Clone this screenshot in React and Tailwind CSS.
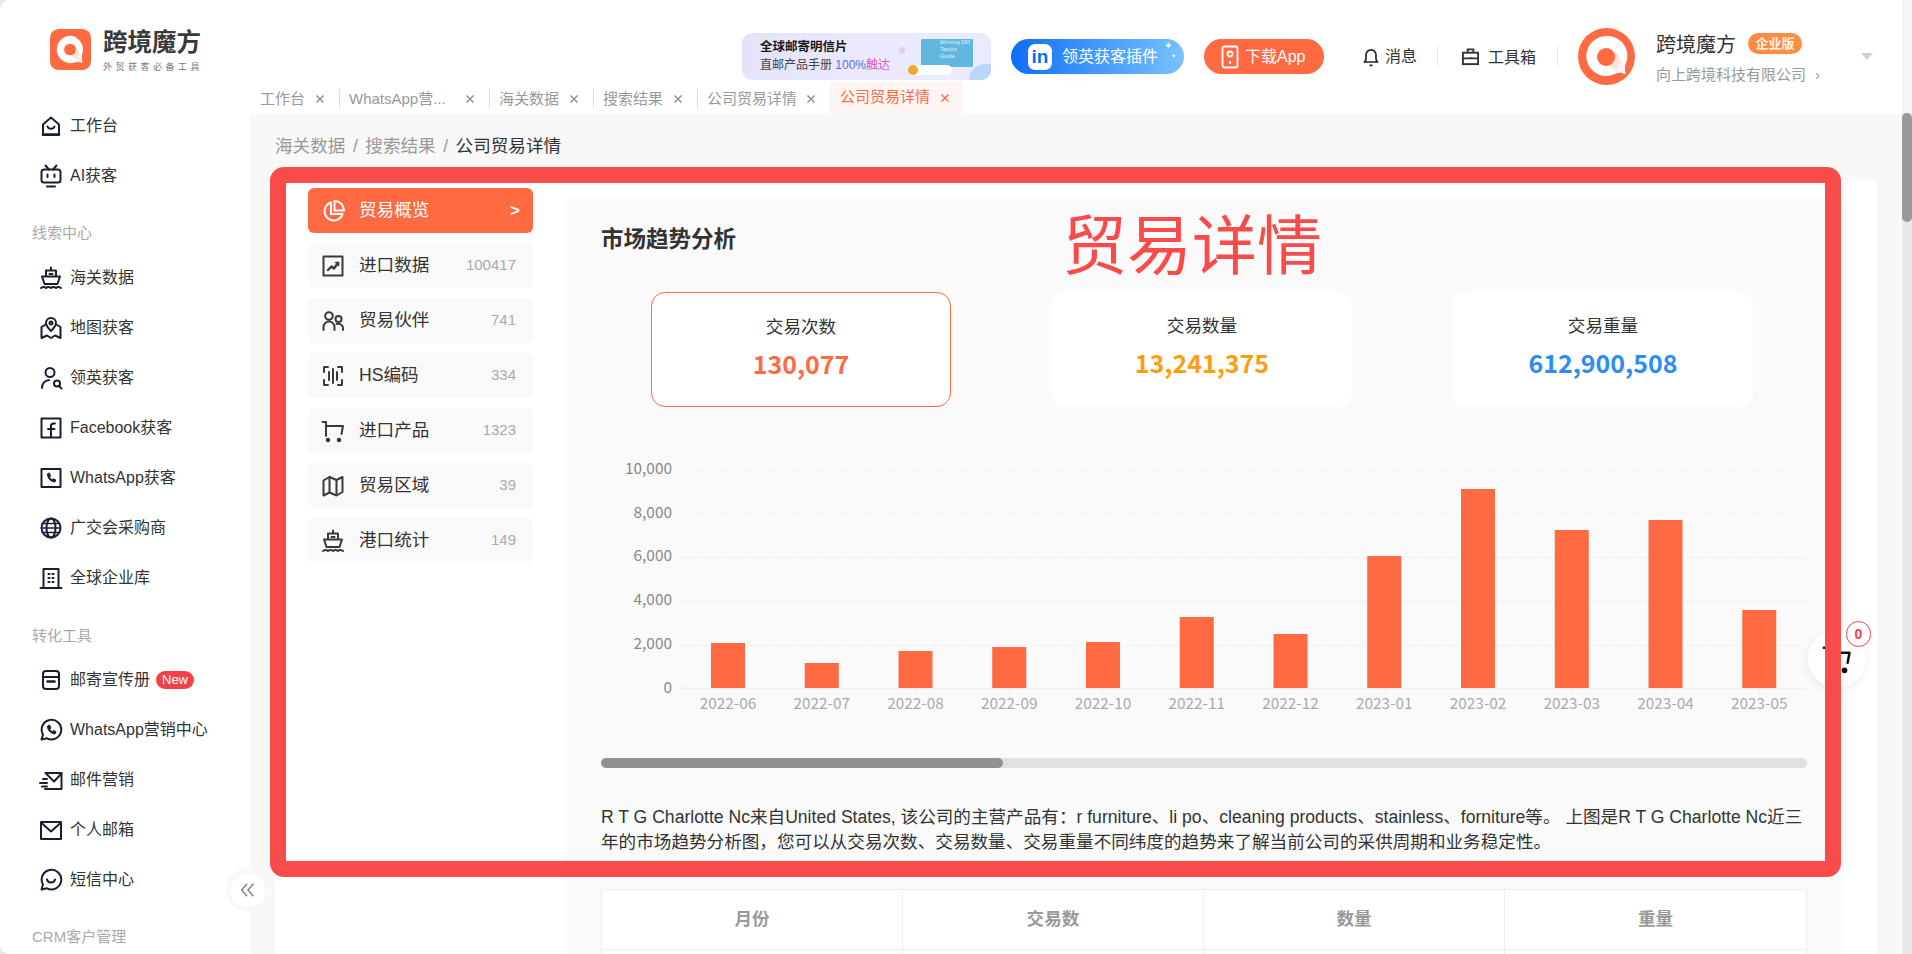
const sideGroups = [
  {
    items: [
      { label: "工作台", icon: "home" },
      { label: "AI获客", icon: "robot" },
    ],
  },
  {
    title: "线索中心",
    titleClass: "mt-[22px] mb-[10px]",
    items: [
      { label: "海关数据", icon: "ship" },
      { label: "地图获客", icon: "map" },
      { label: "领英获客", icon: "person" },
      { label: "Facebook获客", icon: "facebook" },
      { label: "WhatsApp获客", icon: "phoneBox" },
      { label: "广交会采购商", icon: "globe" },
      { label: "全球企业库", icon: "building" },
    ],
  },
  {
    title: "转化工具",
    titleClass: "mt-[23px] mb-[9px]",
    items: [
      { label: "邮寄宣传册", icon: "archive", isNew: true },
      { label: "WhatsApp营销中心", icon: "whatsapp" },
      { label: "邮件营销", icon: "mailFast" },
      { label: "个人邮箱", icon: "mail" },
      { label: "短信中心", icon: "sms" },
    ],
  },
];

const tabs = [
  { label: "工作台", w: "w-[80px]" },
  { label: "WhatsApp营...", w: "w-[150px]" },
  { label: "海关数据", w: "w-[104px]" },
  { label: "搜索结果", w: "w-[104px]" },
  { label: "公司贸易详情", w: "w-[132px]", last: true },
];

const menu = [
  { label: "贸易概览", icon: "pie", active: true },
  { label: "进口数据", icon: "chart", count: "100417" },
  { label: "贸易伙伴", icon: "people", count: "741" },
  { label: "HS编码", icon: "scan", count: "334" },
  { label: "进口产品", icon: "cart", count: "1323" },
  { label: "贸易区域", icon: "fold", count: "39" },
  { label: "港口统计", icon: "ship", count: "149" },
];

const stats = [
  { label: "交易次数", value: "130,077", color: "text-[#ff6a43]", active: true },
  { label: "交易数量", value: "13,241,375", color: "text-[#ff9c0f]" },
  { label: "交易重量", value: "612,900,508", color: "text-[#2b8cf7]" },
];

const bars = [
  ["2022-06", 643], ["2022-07", 663], ["2022-08", 651], ["2022-09", 647],
  ["2022-10", 642], ["2022-11", 617], ["2022-12", 634], ["2023-01", 556],
  ["2023-02", 489], ["2023-03", 530], ["2023-04", 520], ["2023-05", 610],
];

const yTicks = [["10,000", 470], ["8,000", 514], ["6,000", 557], ["4,000", 601], ["2,000", 645]];

function Icon({ name, size = 24, className = "" }) {
  const shapes = {
    home: <><path d="M4 21V10.500L12 3.500l8 7V21z" /><path d="M8.500 12.500c1 3 6 3 7 0" /><path d="M4 20.500h16" strokeWidth="2.600" /></>,
    robot: <><path d="M6.500 1.500l3.500 4M17.500 1.500L14 5.500" /><rect x="2.500" y="5.500" width="19" height="13" rx="2.500" /><path d="M8.500 10.500v2.500M15.500 10.500v2.500" /><path d="M8 22.500h8" /></>,
    ship: <><path d="M12 1.500v3M7 10V4.500h10V10" /><path d="M3 10.500h18L18.500 18h-13z" /><path d="M10.500 8h3" /><path d="M2 22c2.500-1.500 3.500-1.500 5 0 2-1.500 3-1.500 5 0 2-1.500 3-1.500 5 0 1.500-1.500 2.500-1.500 5 0" /></>,
    map: <><path d="M12 15c-3-3-5-5-5-8a5 5 0 0110 0c0 3-2 5-5 8z" /><circle cx="12" cy="7" r="1.500" /><path d="M6 9L2.500 11v11L8 19.500l4 2.500 4-2.500 5.500 2.500V11L18 9" /></>,
    person: <><circle cx="11" cy="6.500" r="4.500" /><path d="M3 22c0-4.500 3-7.500 7-8" /><circle cx="18" cy="17.500" r="3" /><path d="M20 20l2.500 2.500" /></>,
    facebook: <><rect x="2.500" y="2.500" width="19" height="19" /><path d="M16 7.500h-1.500c-1.500 0-2.500 1-2.500 2.500v11M9 13h6.500" /></>,
    phoneBox: <><rect x="2.500" y="3" width="19" height="18" /><path d="M8.500 8c0 4.500 3 7.500 7.500 8l.7-2.200-2.700-1-1 1c-1-.5-2-1.500-2.500-2.800l1-1-1-2.700z" fill="currentColor" strokeWidth="1" /></>,
    globe: <><circle cx="12" cy="12" r="9.500" /><ellipse cx="12" cy="12" rx="4.500" ry="9.500" /><path d="M2.500 12h19M3.500 7.500h17M3.500 16.500h17" strokeWidth="1.500" /></>,
    building: <><path d="M4.500 22V3h15v19" /><path d="M1.500 22h21" /><path d="M9.500 8h1M13.500 8h1M9.500 12h1M13.500 12h1M9.500 16h1M13.500 16h1" strokeWidth="2.200" /></>,
    archive: <><path d="M4 9h16v9a3 3 0 01-3 3H7a3 3 0 01-3-3z" /><path d="M4 9V6a3 3 0 013-3h10a3 3 0 013 3v3" /><path d="M8.500 13.500h7" strokeWidth="2.500" /></>,
    whatsapp: <><path d="M2.500 21.500l1.500-5A9.800 9.800 0 1 1 8 20.300z" /><path d="M8.500 8.500c.2 4 3 6.800 7.500 7.500l1-2.300-2.800-1.200-1 1.200c-1.200-.6-2-1.500-2.500-2.700l1.200-1-1.200-2.700z" fill="currentColor" strokeWidth="1" /></>,
    mailFast: <><path d="M6.500 5H22.500v16H6" /><path d="M7 5.500l8 8 7.500-8" /><path d="M1 15H8M3 18.500h5M4 11h4" /></>,
    mail: <><rect x="2" y="4" width="20" height="17" /><path d="M2.500 5l9.500 8.500L21.500 5" /></>,
    sms: <><path d="M2.500 21.500l1.500-5A9.800 9.800 0 1 1 8 20.300z" /><path d="M8 11.500c1 4 7 4 8 0" /></>,
    pie: <><path d="M10 3.500a9.200 9.200 0 1 0 11.500 11.500H10z" /><path d="M13.500 2v9.500H23A9.500 9.500 0 0 0 13.500 2z" /></>,
    chart: <><rect x="2.500" y="2.500" width="19" height="19" /><path d="M7 16l3.500-3.500 2.500 2 4-5.500" strokeWidth="2.400" /><path d="M14.500 8.500h3v3" strokeWidth="1.500" /></>,
    people: <><circle cx="8" cy="7" r="3.800" /><path d="M2.500 21v-3a5.500 5.500 0 0111 0v3" /><circle cx="17.500" cy="10" r="3" /><path d="M15.500 15c3-1 6.500 1 6.500 4v2" /></>,
    scan: <><path d="M7 3H3v5M17 3h4v5M3 16v5h4M21 16v5h-4" /><path d="M8 8v8M12 5v14M16 8v8" /></>,
    cart: <><path d="M1.500 3h3.500v14M5 7h17l-1.500 8" /><circle cx="7" cy="21" r="1.300" fill="currentColor" /><circle cx="18" cy="21" r="1.300" fill="currentColor" /></>,
    fold: <><path d="M2.500 6.500L8.500 3l7 3 6-3v15l-6 3.500-7-3-6 3z" /><path d="M8.500 3v15M15.500 6v15" /></>,
  };
  return (
    <svg viewBox="0 0 24 24" width={size} height={size} fill="none" stroke="currentColor" strokeWidth="2" strokeLinecap="round" strokeLinejoin="round" className={className}>
      {shapes[name]}
    </svg>
  );
}

function CloseX({ color = "#888" }) {
  return (
    <svg viewBox="0 0 10 10" width="10" height="10" fill="none" stroke={color} strokeWidth="1.400" className="shrink-0">
      <path d="M1.500 1.500l7 7M8.500 1.500l-7 7" />
    </svg>
  );
}

function BrandMark({ size }) {
  return (
    <svg viewBox="0 0 42 42" width={size} height={size} className="shrink-0">
      <defs>
        <linearGradient id="markTail" x1="0" y1="0" x2="1" y2="1">
          <stop offset="0" stopColor="#ffc9b5" />
          <stop offset="1" stopColor="#ffffff" />
        </linearGradient>
      </defs>
      <rect width="42" height="42" rx="9" fill="#ff6a43" />
      <path d="M21 7a14 14 0 1 0 4 27.400c3-.9 5.500-.6 8.500.3-1-3-1.200-6-.5-9A14 14 0 0 0 21 7z" fill="#fff" />
      <path d="M22 16c5 1 9 7 11 18-5-1-9-4-11-7z" fill="url(#markTail)" />
      <circle cx="20.500" cy="21" r="6" fill="#ff6a43" />
    </svg>
  );
}

function Avatar() {
  return (
    <svg viewBox="0 0 57 57" width="57" height="57" className="shrink-0">
      <defs>
        <linearGradient id="avatarTail" x1="0" y1="0" x2="1" y2="1">
          <stop offset="0" stopColor="#ffc9b5" />
          <stop offset="1" stopColor="#ffffff" />
        </linearGradient>
      </defs>
      <circle cx="28.500" cy="28.500" r="28.500" fill="#ff6a43" />
      <path d="M28.500 8a20 20 0 1 0 9 37.800c4-1.800 7-1 10.500.6-1.200-3-1.500-6-.6-9.800A20 20 0 0 0 28.500 8z" fill="#fff" />
      <path d="M30 20c8 2 14 10 17.500 26-8-2-14-6-17.500-9z" fill="url(#avatarTail)" />
      <circle cx="28" cy="29" r="9" fill="#ff6a43" />
    </svg>
  );
}

function Sidebar() {
  return (
    <aside className="relative flex h-full w-[250px] shrink-0 flex-col overflow-hidden bg-white">
      <div className="flex h-[101px] items-start pt-[29px] pl-[50px]">
        <BrandMark size={41} />
        <div className="ml-[12px] flex flex-col">
          <span className="-mt-[3px] text-[24.5px] leading-[30px] font-bold text-[#3a3a3a] font-['Noto_Sans_CJK_SC',sans-serif]">跨境魔方</span>
          <span className="mt-[6px] text-[9px] leading-[10px] tracking-[3.500px] whitespace-nowrap text-[#777]">外贸获客必备工具</span>
        </div>
      </div>
      {sideGroups.map((group, i) => (
        <div key={i} className="flex flex-col">
          {group.title && (
            <div className={`pl-[32px] text-[15px] leading-[20px] text-[#aaa] ${group.titleClass}`}>{group.title}</div>
          )}
          {group.items.map((item) => (
            <div key={item.label} className="flex h-[50px] items-center pl-[39px] text-[16px] text-[#333]">
              <Icon name={item.icon} className="shrink-0 text-[#172033]" />
              <span className="ml-[7px] whitespace-nowrap">{item.label}</span>
              {item.isNew && (
                <span className="ml-[6px] flex h-[18px] w-[38px] items-center justify-center rounded-full bg-[#f8404a] text-[13px] text-white">New</span>
              )}
            </div>
          ))}
        </div>
      ))}
      <div className="mt-[22px] pl-[32px] text-[15px] leading-[20px] text-[#aaa]">CRM客户管理</div>
    </aside>
  );
}

function TopBar() {
  return (
    <header className="relative z-10 flex h-[81px] shrink-0 items-start pl-[492px]">
      <div className="relative mt-[33px] h-[47px] w-[249px] shrink-0 overflow-hidden rounded-[10px] bg-gradient-to-r from-[#e4e3fb] via-[#ebe9fd] to-[#e9ecfd] pl-[18px]">
        <div className="pt-[6px] text-[12.5px] leading-[16px] font-bold text-[#1a1a1a]">全球邮寄明信片</div>
        <div className="mt-[2px] text-[12px] leading-[16px] text-[#444]">
          直邮产品手册 <span className="text-[#5a6cf0]">100%</span><span className="text-[#d857c8]">触达</span>
        </div>
        <div className="absolute top-[6px] left-[179px] h-[28px] w-[52px] rounded-[1px] bg-[#63b7df] pl-[19px] text-[5.5px] leading-[7px] text-[#dff2fb]">Winning DM Tactics Guide.</div>
        <div className="absolute top-[14px] left-[157px] h-[7px] w-[6px] rounded-full bg-[#e3cdf5]" />
        <div className="absolute right-[39px] bottom-[5px] h-[10px] w-[40px] rounded-full bg-white" />
        <div className="absolute right-[73px] bottom-[5px] h-[10px] w-[10px] rounded-full bg-[#f7a531]" />
        <div className="absolute right-0 bottom-0 h-[16px] w-[22px] rounded-tl-full bg-[#bcd6fb]" />
      </div>

      <div className="relative mt-[39px] ml-[20px] flex h-[35px] w-[173px] shrink-0 items-center rounded-full bg-gradient-to-r from-[#0a6cf5] to-[#76c2ff] pl-[17px] text-[16px] text-white">
        <span className="flex h-[26px] w-[24px] items-center justify-center rounded-[7px] bg-white text-[19px] leading-none font-bold text-[#0a6cf5]">in</span>
        <span className="ml-[10px] whitespace-nowrap">领英获客插件</span>
        <span className="absolute top-[2px] right-[12px] text-[10px] leading-none">✦</span>
        <span className="absolute top-[14px] right-[8px] text-[6px] leading-none">✦</span>
      </div>

      <div className="mt-[39px] ml-[20px] flex h-[35px] w-[120px] shrink-0 items-center rounded-full bg-[#ff6a43] pl-[17px] text-[16px] text-white">
        <svg viewBox="0 0 18 24" width="18" height="24" fill="none" stroke="#fff" strokeWidth="1.800">
          <rect x="1.500" y="1.500" width="15" height="21" rx="2" />
          <circle cx="9" cy="9" r="2.500" />
          <path d="M9 17v1" strokeLinecap="round" strokeWidth="2.200" />
        </svg>
        <span className="ml-[6px]">下载App</span>
      </div>

      <div className="mt-[45px] ml-[37px] flex h-[24px] items-center text-[16px] text-[#333]">
        <svg viewBox="0 0 24 24" width="20" height="20" fill="none" stroke="#222" strokeWidth="2" strokeLinejoin="round">
          <path d="M4 18c1.500-1 2-2 2-4V9.500a6 6 0 0112 0V14c0 2 .5 3 2 4z" />
          <path d="M11 22h2" strokeLinecap="round" />
        </svg>
        <span className="ml-[4px]">消息</span>
      </div>
      <div className="mt-[46px] ml-[20px] h-[20px] w-px bg-[#e3e3e3]" />
      <div className="mt-[43px] ml-[23px] flex h-[26px] items-center text-[16px] text-[#333]">
        <svg viewBox="0 0 20 20" width="19" height="19" fill="none" stroke="#333" strokeWidth="2">
          <rect x="2" y="6" width="16" height="12" />
          <path d="M7 6V2.500h6V6M2 12h16" />
          <path d="M10 10.500v2" strokeWidth="1.500" />
        </svg>
        <span className="mt-[4px] ml-[8px]">工具箱</span>
      </div>
      <div className="mt-[46px] ml-[21px] h-[20px] w-px bg-[#e3e3e3]" />
      <div className="mt-[28px] ml-[20px] shrink-0">
        <Avatar />
      </div>
      <div className="mt-[30px] ml-[21px] flex w-[164px] shrink-0 flex-col">
        <div className="flex h-[30px] items-center">
          <span className="text-[20px] text-[#333]">跨境魔方</span>
          <span className="-mt-[3px] ml-[12px] flex h-[21px] w-[54px] items-center justify-center rounded-full bg-gradient-to-r from-[#ff8a3d] to-[#ff8f45] text-[13px] font-bold text-[#fff3e8]">企业版</span>
        </div>
        <div className="mt-[3px] flex h-[24px] items-center whitespace-nowrap text-[15px] text-[#999]">
          向上跨境科技有限公司
          <span className="ml-[9px] text-[15px] text-[#999]">›</span>
        </div>
      </div>
      <div className="mt-[53px] ml-[41px] h-0 w-0 border-x-[6px] border-t-[7px] border-x-transparent border-t-[#ccd0d8]" />
    </header>
  );
}

function TabBar() {
  return (
    <nav className="flex h-[33px] shrink-0 items-start pl-[10px] text-[15px] text-[#999]">
      {tabs.map((tab, i) => (
        <div
          key={i}
          className={`mt-[8px] flex h-[19px] ${tab.w} items-center justify-between ${tab.last ? "" : "border-r border-[#ddd]"} pr-[14px] ${i > 0 ? "pl-[9px]" : ""} leading-none whitespace-nowrap`}
        >
          <span>{tab.label}</span>
          <CloseX />
        </div>
      ))}
      <div className="flex h-[33px] w-[134px] items-center justify-between rounded-t-[6px] bg-[#fff5f2] pr-[14px] pl-[10px] text-[#ff6a43]">
        <span>公司贸易详情</span>
        <CloseX color="#ff6a43" />
      </div>
    </nav>
  );
}

function SideMenu() {
  return (
    <div className="ml-[33px] flex w-[225px] shrink-0 flex-col gap-[10px] pt-[8px]">
      {menu.map((m) => (
        <div
          key={m.label}
          className={`flex h-[45px] items-center rounded-[6px] pl-[13px] ${m.active ? "bg-[#ff6a43] pr-[13px] text-white" : "bg-[#f9f9f9] pr-[17px] text-[#333]"}`}
        >
          <Icon name={m.icon} size={24} className={m.active ? "text-white" : "text-[#3a3a3a]"} />
          <span className="ml-[14px] flex-1 text-[17.6px] whitespace-nowrap">{m.label}</span>
          {m.active ? <span className="text-[17px] font-bold">&gt;</span> : <span className="text-[15px] text-[#aaa]">{m.count}</span>}
        </div>
      ))}
    </div>
  );
}

function Chart() {
  const top = 450;
  const axisY = 238.5;
  return (
    <svg viewBox="0 0 1206 280" width="1206" height="280" className="block font-['Noto_Sans_CJK_SC',sans-serif]">
      {yTicks.map(([label, y]) => (
        <g key={label}>
          <line x1="80" x2="1205" y1={y - top} y2={y - top} stroke="#e8ecf4" strokeDasharray="2 1" />
          <text x="71" y={y - top + 4} textAnchor="end" fontSize="15.400" fill="#888">{label}</text>
        </g>
      ))}
      <line x1="80" x2="1205" y1={axisY} y2={axisY} stroke="#eeeeee" strokeWidth="1.500" />
      <text x="71" y="243" textAnchor="end" fontSize="15.400" fill="#888">0</text>
      {bars.map(([label, barTop], i) => {
        const cx = 127 + i * 93.75;
        return (
          <g key={label}>
            <rect x={cx - 17} y={barTop - top} width="34" height={688 - barTop} fill="#ff6a43" />
            <line x1={cx} x2={cx} y1="239" y2="244" stroke="#eeeeee" />
            <text x={cx} y="259" textAnchor="middle" fontSize="15.400" fill="#aaa">{label}</text>
          </g>
        );
      })}
    </svg>
  );
}

function TrendPanel() {
  const headers = ["月份", "交易数", "数量", "重量"];
  return (
    <div className="mt-[17px] ml-[32px] w-[1279px] shrink-0 rounded-t-[12px] bg-[#fafafa] pr-[37px] pl-[36px]">
      <h2 className="pt-[28px] text-[22.5px] leading-[30px] font-bold text-[#333]">市场趋势分析</h2>
      <div className="mt-[37px] ml-[50px] flex gap-[101px]">
        {stats.map((s) => (
          <div
            key={s.label}
            className={`flex h-[115px] w-[300px] flex-col items-center rounded-[14px] bg-white pt-[18px] font-['Noto_Sans_CJK_SC',sans-serif] ${s.active ? "border border-[#ff6a43]" : ""}`}
          >
            <span className="text-[17.6px] leading-[30px] text-[#333]">{s.label}</span>
            <span className={`mt-[4px] text-[25px] leading-[36px] font-bold ${s.color}`}>{s.value}</span>
          </div>
        ))}
      </div>
      <div className="mt-[43px]">
        <Chart />
      </div>
      <div className="mt-[28px] h-[10px] w-full rounded-full bg-[#e0e0e0]">
        <div className="h-full w-[402px] rounded-full bg-[#909090]" />
      </div>
      <p className="mt-[37px] text-[17.6px] leading-[25px] text-[#333]">
        R T G Charlotte Nc来自United States, 该公司的主营产品有：r furniture、li po、cleaning products、stainless、forniture等。 上图是R T G Charlotte Nc近三年的市场趋势分析图，您可以从交易次数、交易数量、交易重量不同纬度的趋势来了解当前公司的采供周期和业务稳定性。
      </p>
      <div className="mt-[34px] grid grid-cols-4 border border-b-0 border-[#eee] bg-white">
        {headers.map((h, i) => (
          <div key={h} className={`flex h-[60px] items-center justify-center border-b border-[#eee] text-[17.6px] font-bold text-[#999] ${i < 3 ? "border-r" : ""}`}>
            {h}
          </div>
        ))}
        {headers.map((h, i) => (
          <div key={h} className={`h-[60px] border-b border-[#eee] ${i < 3 ? "border-r" : ""}`} />
        ))}
      </div>
    </div>
  );
}

export default function App() {
  return (
    <div className="relative flex h-[954px] w-[1912px] overflow-hidden bg-[#e9e9e9] font-['Liberation_Sans','Noto_Sans_CJK_SC',sans-serif]">
      <div className="flex h-full w-[1902px] shrink-0 overflow-hidden rounded-l-[10px] bg-white">
        <Sidebar />
        <div className="flex h-full w-[1652px] flex-col">
          <TopBar />
          <TabBar />
          <main className="flex-1 overflow-hidden bg-[#f8f8f8] px-[25px]">
            <div className="flex h-[66px] items-center pb-[2px] text-[17.6px] text-[#999]">
              海关数据<span className="mx-[7.500px]">/</span>搜索结果<span className="mx-[7.500px]">/</span><span className="text-[#333]">公司贸易详情</span>
            </div>
            <div className="flex h-[800px] bg-white">
              <SideMenu />
              <TrendPanel />
            </div>
          </main>
        </div>
      </div>

      {/* scrollbar */}
      <div className="h-full w-[10px] bg-[#e8e8e8]">
        <div className="h-[113px] bg-[#f4f4f4]" />
        <div className="h-[109px] rounded-[5px] bg-[#999]" />
      </div>

      {/* collapse button */}
      <div className="absolute top-[868px] left-[226px] flex h-[44px] w-[44px] items-center justify-center rounded-full bg-[#f8f8f8]">
        <div className="flex h-[34px] w-[34px] items-center justify-center rounded-full bg-white">
          <svg viewBox="0 0 20 20" width="18" height="18" fill="none" stroke="#888" strokeWidth="1.800">
            <path d="M9 3l-6 7 6 7M16 3l-6 7 6 7" />
          </svg>
        </div>
      </div>

      {/* floating cart */}
      <div className="absolute top-[630px] left-[1808px] flex h-[58px] w-[58px] items-center justify-center rounded-full bg-white shadow-[0_2px_10px_rgba(0,0,0,0.08)]">
        <Icon name="cart" size={30} className="text-[#111]" />
      </div>
      <div className="absolute top-[621px] left-[1846px] flex h-[26px] w-[25px] items-center justify-center rounded-full border border-[#f8404a] bg-white text-[14px] font-bold text-[#f8404a]">0</div>

      {/* annotation frame */}
      <div className="pointer-events-none absolute top-[167px] left-[270px] h-[710px] w-[1571px] rounded-[14px] border-[16px] border-[#f94c4a]" />
      <div className="pointer-events-none absolute top-[198px] left-[1062px] text-[65px] leading-[86px] text-[#f94c4a] font-['Noto_Sans_CJK_SC',sans-serif]">贸易详情</div>
    </div>
  );
}
